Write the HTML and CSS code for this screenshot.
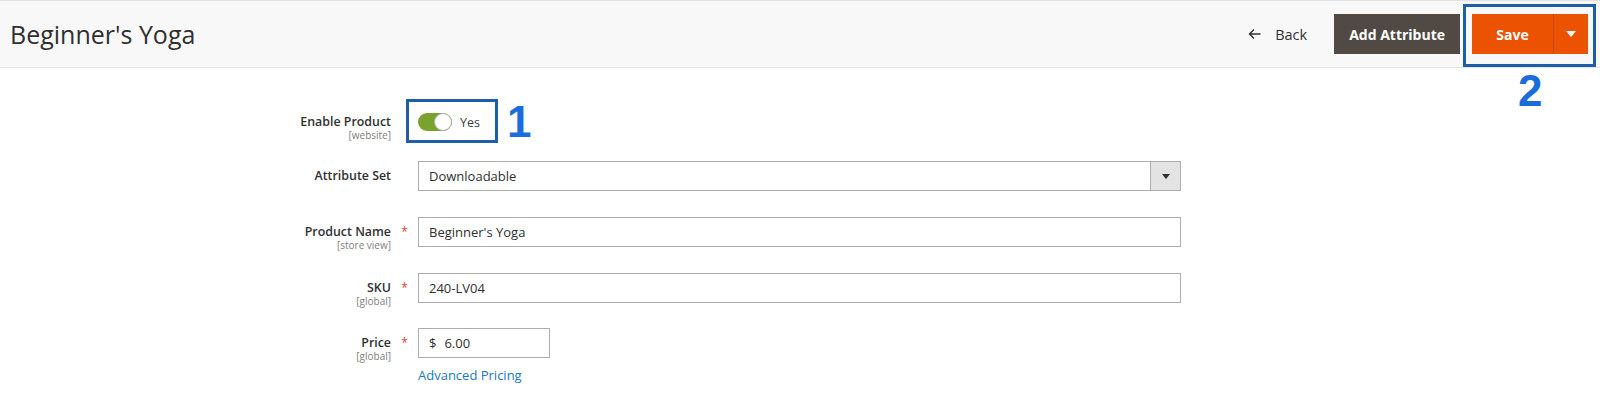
FILE: index.html
```html
<!DOCTYPE html>
<html lang="en">
<head>
<meta charset="utf-8">
<title>Beginner's Yoga</title>
<link rel="stylesheet" href="styles.css">
</head>
<body>
<header class="page-header">
  <h1 class="page-title">Beginner's Yoga</h1>
  <div class="page-actions">
    <a class="btn-back" href="#">
      <svg class="back-arrow" width="13" height="12" viewBox="0 0 13 12"><path d="M12.5 6H1.5M6 1.5L1.5 6L6 10.5" fill="none" stroke="#303030" stroke-width="1.4"/></svg>
      <span>Back</span>
    </a>
    <button class="btn-secondary">Add Attribute</button>
    <div class="save-group">
      <button class="btn-save">Save</button>
      <button class="btn-save-toggle"><svg width="10" height="6" viewBox="0 0 10 6"><path d="M0 0H10L5 6Z" fill="#fff"/></svg></button>
      <span class="mark-box mark-save"></span>
      <span class="mark-num mark-num-2">2</span>
    </div>
  </div>
</header>

<main class="form">
  <div class="field field-first">
    <div class="field-label"><span class="label-text">Enable Product</span><span class="scope">[website]</span></div>
    <div class="req"></div>
    <div class="control toggle-control">
      <span class="switch"><span class="knob"></span></span>
      <span class="switch-text">Yes</span>
      <span class="mark-box mark-toggle"></span>
      <span class="mark-num mark-num-1">1</span>
    </div>
  </div>

  <div class="field">
    <div class="field-label"><span class="label-text">Attribute Set</span></div>
    <div class="req"></div>
    <div class="control">
      <div class="select"><span class="select-value">Downloadable</span><span class="select-btn"><svg width="8" height="5" viewBox="0 0 8 5"><path d="M0 0H8L4 5Z" fill="#303030"/></svg></span></div>
    </div>
  </div>

  <div class="field">
    <div class="field-label"><span class="label-text">Product Name</span><span class="scope">[store view]</span></div>
    <div class="req">*</div>
    <div class="control"><div class="input">Beginner's Yoga</div></div>
  </div>

  <div class="field">
    <div class="field-label"><span class="label-text">SKU</span><span class="scope">[global]</span></div>
    <div class="req">*</div>
    <div class="control"><div class="input">240-LV04</div></div>
  </div>

  <div class="field field-price">
    <div class="field-label"><span class="label-text">Price</span><span class="scope">[global]</span></div>
    <div class="req">*</div>
    <div class="control">
      <div class="input input-price"><span class="currency">$</span><span>6.00</span></div>
      <a class="link" href="#">Advanced Pricing</a>
    </div>
  </div>
</main>
</body>
</html>
```

FILE: styles.css
```css
* { box-sizing: border-box; }

html, body {
  margin: 0;
  padding: 0;
  background: #ffffff;
  font-family: "Open Sans", "Liberation Sans", sans-serif;
  color: #303030;
  overflow: hidden;
}

.page-header {
  height: 68px;
  background: #f8f8f8;
  border-top: 1px solid #e3e3e3;
  border-bottom: 1px solid #e3e3e3;
  display: flex;
  align-items: center;
  justify-content: space-between;
  padding: 0 12px 0 10px;
}

.page-title {
  margin: 0;
  font-size: 25px;
  font-weight: 400;
  line-height: 30px;
  color: #303030;
}

.page-actions {
  display: flex;
  align-items: center;
}

.btn-back {
  display: flex;
  align-items: center;
  gap: 14px;
  color: #303030;
  text-decoration: none;
  font-size: 14.5px;
  margin-right: 27px;
}

.back-arrow { display: block; }

.btn-secondary,
.btn-save,
.btn-save-toggle {
  border: 0;
  height: 40px;
  font-family: "Open Sans", "Liberation Sans", sans-serif;
  font-size: 14px;
  font-weight: 700;
  color: #ffffff;
  cursor: pointer;
}

.btn-secondary {
  background: #514943;
  padding: 0 15px;
  margin-right: 12px;
}

.save-group {
  position: relative;
  display: flex;
}

.btn-save {
  background: #eb5202;
  width: 81px;
  padding: 0;
}

.btn-save-toggle {
  background: #eb5202;
  width: 35px;
  padding: 0;
  border-left: 1px solid #c94604;
  display: flex;
  align-items: center;
  justify-content: center;
}

.mark-box {
  position: absolute;
  border: 3px solid #1d5ea6;
  pointer-events: none;
}

.mark-save {
  top: -10px;
  left: -9px;
  width: 133px;
  height: 63px;
}

.mark-num {
  position: absolute;
  font-family: "Liberation Sans", Arial, sans-serif;
  font-weight: 700;
  font-size: 44px;
  line-height: 44px;
  color: #1b6ddc;
}

.mark-num-2 {
  top: 55px;
  left: 46px;
}

/* Form */
.form {
  padding-top: 39px;
}

.field {
  display: flex;
  align-items: flex-start;
  margin-bottom: 26px;
}

.field-first {
  margin-bottom: 24px;
}

.field-price {
  margin-top: -1px;
}

.field-label {
  width: 391px;
  height: 30px;
  flex: none;
  text-align: right;
  display: flex;
  flex-direction: column;
  align-items: flex-end;
}

.label-text {
  font-size: 12.4px;
  font-weight: 600;
  line-height: 30px;
  color: #303030;
}

.scope {
  font-size: 10px;
  line-height: 12px;
  margin-top: -8px;
  color: #808080;
}

.req {
  width: 27px;
  height: 30px;
  flex: none;
  text-align: center;
  color: #e0413a;
  font-size: 12px;
  line-height: 30px;
}

.control {
  width: 763px;
  flex: none;
}

.toggle-control {
  position: relative;
  height: 30px;
  display: flex;
  align-items: center;
}

.switch {
  position: relative;
  width: 34px;
  height: 18px;
  border-radius: 9px;
  background: #79a22e;
  flex: none;
}

.knob {
  position: absolute;
  right: 0;
  top: 0;
  width: 18px;
  height: 18px;
  border-radius: 50%;
  background: #ffffff;
  border: 1px solid #adadad;
}

.switch-text {
  margin-left: 8px;
  font-size: 12.5px;
  color: #404040;
}

.mark-toggle {
  top: -8px;
  left: -12px;
  width: 92px;
  height: 44px;
}

.mark-num-1 {
  top: -7px;
  left: 89px;
}

.input,
.select {
  height: 30px;
  border: 1px solid #adadad;
  background: #ffffff;
  font-size: 13px;
  color: #303030;
  display: flex;
  align-items: center;
}

.input {
  padding: 0 10px;
}

.select-value {
  flex: 1;
  padding: 0 10px;
}

.select-btn {
  width: 30px;
  height: 100%;
  background: #e3e3e3;
  border-left: 1px solid #adadad;
  display: flex;
  align-items: center;
  justify-content: center;
}

.input-price {
  width: 132px;
  gap: 8px;
}

.currency {
  color: #303030;
}

.link {
  display: inline-block;
  margin-top: 8px;
  font-size: 13px;
  line-height: 18px;
  color: #1979c3;
  text-decoration: none;
}
```
